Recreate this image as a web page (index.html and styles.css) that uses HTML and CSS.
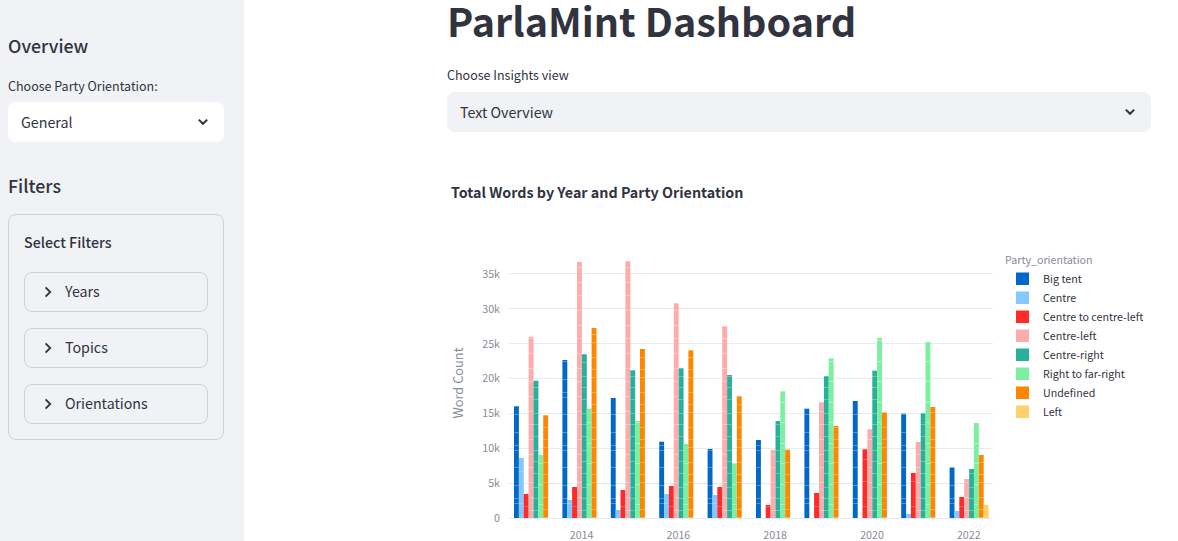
FILE: index.html
```html
<!DOCTYPE html>
<html lang="en">
<head>
<meta charset="utf-8">
<title>ParlaMint Dashboard</title>
<link rel="stylesheet" href="styles.css">
</head>
<body>
<div class="app">
  <aside class="sidebar">
    <h3 class="side-heading first">Overview</h3>
    <label class="field-label">Choose Party Orientation:</label>
    <div class="select select-white">
      <span>General</span>
      <svg class="chev" viewBox="0 0 12 8" width="12" height="8"><path d="M1.8 1.6 6 5.8l4.2-4.2" fill="none" stroke="#31333f" stroke-width="2"/></svg>
    </div>
    <h3 class="side-heading second">Filters</h3>
    <div class="filter-box">
      <div class="filter-title">Select Filters</div>
      <div class="expander">
        <svg class="caret" viewBox="0 0 8 12" width="8" height="12"><path d="M1.6 1.4 6.2 6l-4.6 4.6" fill="none" stroke="#31333f" stroke-width="1.8"/></svg>
        <span>Years</span>
      </div>
      <div class="expander">
        <svg class="caret" viewBox="0 0 8 12" width="8" height="12"><path d="M1.6 1.4 6.2 6l-4.6 4.6" fill="none" stroke="#31333f" stroke-width="1.8"/></svg>
        <span>Topics</span>
      </div>
      <div class="expander">
        <svg class="caret" viewBox="0 0 8 12" width="8" height="12"><path d="M1.6 1.4 6.2 6l-4.6 4.6" fill="none" stroke="#31333f" stroke-width="1.8"/></svg>
        <span>Orientations</span>
      </div>
    </div>
  </aside>
  <main class="main">
    <h1 class="title">ParlaMint Dashboard</h1>
    <label class="field-label main-label">Choose Insights view</label>
    <div class="select select-grey">
      <span>Text Overview</span>
      <svg class="chev" viewBox="0 0 12 8" width="12" height="8"><path d="M1.8 1.6 6 5.8l4.2-4.2" fill="none" stroke="#31333f" stroke-width="2"/></svg>
    </div>
    <svg class="chart" viewBox="447 172 704 369" width="704" height="369">
      <defs>
        <pattern id="p1" patternUnits="userSpaceOnUse" width="10" height="53"><rect width="10" height="53" fill="#0068c9"/><path d="M0 8.5h10M0 21.5h10M0 26.5h10M0 43.5h10" stroke="#fff" stroke-opacity=".28"/></pattern>
        <pattern id="p2" patternUnits="userSpaceOnUse" width="10" height="61"><rect width="10" height="61" fill="#83c9ff"/><path d="M0 15.5h10M0 44.5h10" stroke="#fff" stroke-opacity=".25"/></pattern>
        <pattern id="p3" patternUnits="userSpaceOnUse" width="10" height="47"><rect width="10" height="47" fill="#ff2b2b"/><path d="M0 11.5h10M0 36.5h10" stroke="#fff" stroke-opacity=".2"/></pattern>
        <pattern id="p4" patternUnits="userSpaceOnUse" width="10" height="43"><rect width="10" height="43" fill="#ffabab"/><path d="M0 9.5h10M0 24.5h10M0 37.5h10" stroke="#fff" stroke-opacity=".35"/></pattern>
        <pattern id="p5" patternUnits="userSpaceOnUse" width="10" height="37"><rect width="10" height="37" fill="#29b09d"/><path d="M0 6.5h10M0 17.5h10M0 29.5h10" stroke="#fff" stroke-opacity=".28"/></pattern>
        <pattern id="p6" patternUnits="userSpaceOnUse" width="10" height="41"><rect width="10" height="41" fill="#7defa1"/><path d="M0 12.5h10M0 33.5h10" stroke="#fff" stroke-opacity=".35"/></pattern>
        <pattern id="p7" patternUnits="userSpaceOnUse" width="10" height="35"><rect width="10" height="35" fill="#ff8700"/><path d="M0 7.5h10M0 19.5h10M0 27.5h10" stroke="#fff" stroke-opacity=".3"/></pattern>
      </defs>

      <text class="chart-title" x="451" y="198">Total Words by Year and Party Orientation</text>

      <g class="grid">
        <line x1="509" x2="993" y1="273.5" y2="273.5"/>
        <line x1="509" x2="993" y1="308.5" y2="308.5"/>
        <line x1="509" x2="993" y1="343.5" y2="343.5"/>
        <line x1="509" x2="993" y1="378.5" y2="378.5"/>
        <line x1="509" x2="993" y1="413.5" y2="413.5"/>
        <line x1="509" x2="993" y1="448.5" y2="448.5"/>
        <line x1="509" x2="993" y1="483.5" y2="483.5"/>
        <line x1="509" x2="993" y1="518.5" y2="518.5"/>
      </g>

      <g class="tick tick-y">
        <text x="500" y="278">35k</text>
        <text x="500" y="313">30k</text>
        <text x="500" y="348">25k</text>
        <text x="500" y="382">20k</text>
        <text x="500" y="417">15k</text>
        <text x="500" y="452">10k</text>
        <text x="500" y="487">5k</text>
        <text x="500" y="522">0</text>
      </g>
      <g class="tick tick-x">
        <text x="581.6" y="539">2014</text>
        <text x="678.4" y="539">2016</text>
        <text x="775.2" y="539">2018</text>
        <text x="872" y="539">2020</text>
        <text x="968.8" y="539">2022</text>
      </g>
      <text class="axis-title" transform="translate(462.5 383) rotate(-90)">Word Count</text>

      <g fill="url(#p1)">
        <rect x="514" y="406.3" width="4.9" height="111.7"/>
        <rect x="562.4" y="360" width="4.9" height="158"/>
        <rect x="610.8" y="398" width="4.9" height="120"/>
        <rect x="659.2" y="441.7" width="4.9" height="76.3"/>
        <rect x="707.6" y="449" width="4.9" height="69"/>
        <rect x="756" y="440" width="4.9" height="78"/>
        <rect x="804.4" y="408.7" width="4.9" height="109.3"/>
        <rect x="852.8" y="401" width="4.9" height="117"/>
        <rect x="901.2" y="413.7" width="4.9" height="104.3"/>
        <rect x="949.6" y="467.3" width="4.9" height="50.7"/>
      </g>
      <g fill="url(#p2)">
        <rect x="518.9" y="458" width="4.9" height="60"/>
        <rect x="567.3" y="500" width="4.9" height="18"/>
        <rect x="615.7" y="510" width="4.9" height="8"/>
        <rect x="664.1" y="494" width="4.9" height="24"/>
        <rect x="712.5" y="495" width="4.9" height="23"/>
        <rect x="906.1" y="514" width="4.9" height="4"/>
        <rect x="954.5" y="511" width="4.9" height="7"/>
      </g>
      <g fill="url(#p3)">
        <rect x="523.7" y="494" width="4.9" height="24"/>
        <rect x="572.1" y="487" width="4.9" height="31"/>
        <rect x="620.5" y="490" width="4.9" height="28"/>
        <rect x="668.9" y="486" width="4.9" height="32"/>
        <rect x="717.3" y="487" width="4.9" height="31"/>
        <rect x="765.7" y="505" width="4.9" height="13"/>
        <rect x="814.1" y="493" width="4.9" height="25"/>
        <rect x="862.5" y="449.3" width="4.9" height="68.7"/>
        <rect x="910.9" y="473" width="4.9" height="45"/>
        <rect x="959.3" y="497" width="4.9" height="21"/>
      </g>
      <g fill="url(#p4)">
        <rect x="528.6" y="336.7" width="4.9" height="181.3"/>
        <rect x="577" y="262" width="4.9" height="256"/>
        <rect x="625.4" y="261.3" width="4.9" height="256.7"/>
        <rect x="673.8" y="303.3" width="4.9" height="214.7"/>
        <rect x="722.2" y="326.3" width="4.9" height="191.7"/>
        <rect x="770.6" y="450" width="4.9" height="68"/>
        <rect x="819" y="402.3" width="4.9" height="115.7"/>
        <rect x="867.4" y="429.3" width="4.9" height="88.7"/>
        <rect x="915.8" y="442" width="4.9" height="76"/>
        <rect x="964.2" y="479" width="4.9" height="39"/>
      </g>
      <g fill="url(#p5)">
        <rect x="533.5" y="380.7" width="4.9" height="137.3"/>
        <rect x="581.9" y="354.3" width="4.9" height="163.7"/>
        <rect x="630.3" y="370.3" width="4.9" height="147.7"/>
        <rect x="678.7" y="368.3" width="4.9" height="149.7"/>
        <rect x="727.1" y="375" width="4.9" height="143"/>
        <rect x="775.5" y="421" width="4.9" height="97"/>
        <rect x="823.9" y="376" width="4.9" height="142"/>
        <rect x="872.3" y="370.7" width="4.9" height="147.3"/>
        <rect x="920.7" y="413" width="4.9" height="105"/>
        <rect x="969.1" y="469" width="4.9" height="49"/>
      </g>
      <g fill="url(#p6)">
        <rect x="538.3" y="455" width="4.9" height="63"/>
        <rect x="586.7" y="408.7" width="4.9" height="109.3"/>
        <rect x="635.1" y="421" width="4.9" height="97"/>
        <rect x="683.5" y="444" width="4.9" height="74"/>
        <rect x="731.9" y="463" width="4.9" height="55"/>
        <rect x="780.3" y="391.3" width="4.9" height="126.7"/>
        <rect x="828.7" y="358.3" width="4.9" height="159.7"/>
        <rect x="877.1" y="338" width="4.9" height="180"/>
        <rect x="925.5" y="342" width="4.9" height="176"/>
        <rect x="973.9" y="423" width="4.9" height="95"/>
      </g>
      <g fill="url(#p7)">
        <rect x="543.2" y="415.3" width="4.9" height="102.7"/>
        <rect x="591.6" y="328" width="4.9" height="190"/>
        <rect x="640" y="349" width="4.9" height="169"/>
        <rect x="688.4" y="350.3" width="4.9" height="167.7"/>
        <rect x="736.8" y="396.3" width="4.9" height="121.7"/>
        <rect x="785.2" y="449.7" width="4.9" height="68.3"/>
        <rect x="833.6" y="426" width="4.9" height="92"/>
        <rect x="882" y="412.3" width="4.9" height="105.7"/>
        <rect x="930.4" y="407" width="4.9" height="111"/>
        <rect x="978.8" y="455" width="4.9" height="63"/>
      </g>
      <rect x="983.7" y="505" width="4.9" height="13" fill="#ffd16a"/>

      <text class="legend-title" x="1005" y="264">Party_orientation</text>
      <g class="legend">
        <rect x="1016" y="272.5" width="13" height="12.5" fill="#0068c9"/><text x="1043" y="283">Big tent</text>
        <rect x="1016" y="291.5" width="13" height="12.5" fill="#83c9ff"/><text x="1043" y="302">Centre</text>
        <rect x="1016" y="310.5" width="13" height="12.5" fill="#ff2b2b"/><text x="1043" y="321">Centre to centre-left</text>
        <rect x="1016" y="329.5" width="13" height="12.5" fill="#ffabab"/><text x="1043" y="340">Centre-left</text>
        <rect x="1016" y="348.5" width="13" height="12.5" fill="#29b09d"/><text x="1043" y="359">Centre-right</text>
        <rect x="1016" y="367.5" width="13" height="12.5" fill="#7defa1"/><text x="1043" y="378">Right to far-right</text>
        <rect x="1016" y="386.5" width="13" height="12.5" fill="#ff8700"/><text x="1043" y="397">Undefined</text>
        <rect x="1016" y="405.5" width="13" height="12.5" fill="#ffd16a"/><text x="1043" y="416">Left</text>
      </g>
    </svg>
  </main>
</div>
</body>
</html>
```

FILE: styles.css
```css
* { box-sizing: border-box; }

html, body {
  margin: 0;
  height: 100%;
  overflow: hidden;
  background: #fff;
}

body {
  font-family: "Noto Sans CJK SC", "Noto Sans", sans-serif;
  color: #31333f;
}

.app {
  display: flex;
  height: 541px;
}

.sidebar {
  flex: 0 0 244px;
  background: #f0f2f6;
  padding: 0 20px 0 8px;
}

.side-heading {
  margin: 0;
  font-size: 17.8px;
  line-height: 28px;
  font-weight: 500;
}

.side-heading.first { margin-top: 31px; }
.side-heading.second { margin-top: 29px; }

.field-label {
  display: block;
  font-size: 12.5px;
  line-height: 20px;
  font-weight: 400;
}

.sidebar .field-label { margin-top: 17px; margin-bottom: 6px; }

.select {
  display: flex;
  align-items: center;
  justify-content: space-between;
  height: 40px;
  border-radius: 8px;
  font-size: 14.25px;
  line-height: 24px;
}

.select-white { background: #fff; padding: 0 15px 0 13px; }
.select-grey { background: #f0f2f6; padding: 0 15px 0 13px; }

.filter-box {
  margin-top: 15px;
  height: 226px;
  padding: 15px;
  border: 1px solid #cfd1d6;
  border-radius: 8px;
}

.filter-title {
  font-size: 14.25px;
  line-height: 24px;
  font-weight: 500;
  margin-bottom: 18px;
}

.expander {
  display: flex;
  align-items: center;
  height: 40px;
  margin-bottom: 16px;
  padding-left: 19px;
  border: 1px solid #cfd1d6;
  border-radius: 8px;
  font-size: 14.25px;
  line-height: 24px;
}

.expander span { margin-bottom: 2px; }

.caret { margin-right: 13px; }

.main {
  flex: 1;
  padding-left: 203px;
  padding-right: 27px;
}

.title {
  margin: 0;
  height: 65px;
  font-size: 39.5px;
  line-height: 39px;
  font-weight: 700;
}

.main-label { margin-bottom: 7px; }

.chart {
  display: block;
  margin-top: 40px;
}

.chart-title {
  font-size: 14.3px;
  font-weight: 700;
  fill: #31333f;
}

.grid line {
  stroke: #e6eaf1;
  stroke-width: 1;
}

.tick text {
  font-size: 10.7px;
  fill: #888b9b;
}

.tick-y text { text-anchor: end; }
.tick-x text { text-anchor: middle; }

.axis-title {
  font-size: 12.8px;
  fill: #888b9b;
  text-anchor: middle;
}

.legend-title {
  font-size: 10.7px;
  fill: #888b9b;
}

.legend text {
  font-size: 10.7px;
  fill: #31333f;
}
```
